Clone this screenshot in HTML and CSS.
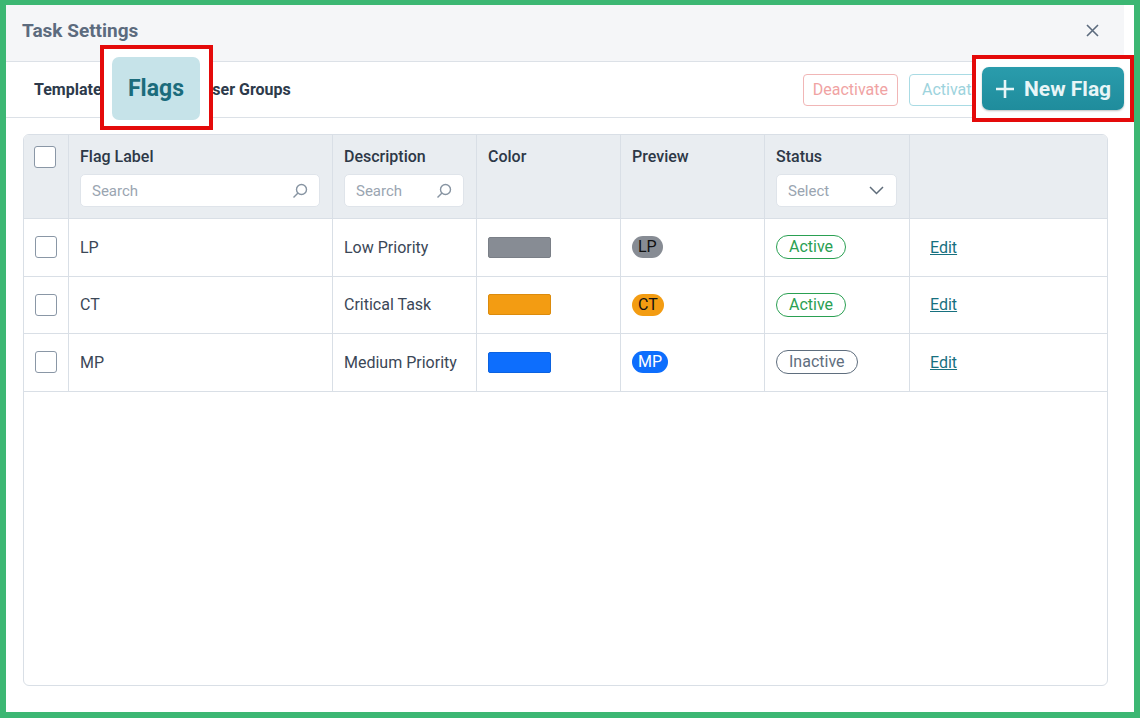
FILE: index.html
```html
<!DOCTYPE html>
<html lang="en">
<head>
    <meta charset="UTF-8">
    <meta name="viewport" content="width=device-width, initial-scale=1.0">
    <title>Task Settings</title>
    <link rel="stylesheet" href="styles.css">
</head>
<body>
    <div class="frame">
        <div class="dialog">
            <div class="dialog-header">
                <h1>Task Settings</h1>
                <button class="close" aria-label="Close">
                    <svg width="13" height="13" viewBox="0 0 13 13"><path d="M1 1L12 12M12 1L1 12" stroke="#5c6b7e" stroke-width="1.6" fill="none"/></svg>
                </button>
            </div>

            <div class="toolbar">
                <nav class="tabs">
                    <span class="tab">Templates</span>
                    <!-- active tab is shown magnified in the callout below -->
                    <span class="tab tab-slot"></span>
                    <span class="tab">User Groups</span>
                </nav>
                <div class="actions">
                    <button class="btn btn-deactivate">Deactivate</button>
                    <button class="btn btn-activate">Activate</button>
                    <span class="btn-slot"></span>
                </div>
            </div>

            <div class="dialog-body">
                <div class="grid">
                    <div class="row head">
                        <div class="cell check-cell"><span class="checkbox"></span></div>
                        <div class="cell">
                            <div class="label">Flag Label</div>
                            <div class="field">
                                <span class="placeholder">Search</span>
                                <svg width="16" height="16" viewBox="0 0 16 16"><circle cx="9.5" cy="6.5" r="5" stroke="#8794a2" stroke-width="1.4" fill="none"/><path d="M6 10L1.5 14.5" stroke="#8794a2" stroke-width="1.5"/></svg>
                            </div>
                        </div>
                        <div class="cell">
                            <div class="label">Description</div>
                            <div class="field">
                                <span class="placeholder">Search</span>
                                <svg width="16" height="16" viewBox="0 0 16 16"><circle cx="9.5" cy="6.5" r="5" stroke="#8794a2" stroke-width="1.4" fill="none"/><path d="M6 10L1.5 14.5" stroke="#8794a2" stroke-width="1.5"/></svg>
                            </div>
                        </div>
                        <div class="cell"><div class="label">Color</div></div>
                        <div class="cell"><div class="label">Preview</div></div>
                        <div class="cell">
                            <div class="label">Status</div>
                            <div class="field select">
                                <span class="placeholder">Select</span>
                                <svg width="15" height="9" viewBox="0 0 15 9"><path d="M1 1L7.5 7.5L14 1" stroke="#5f6c7a" stroke-width="1.5" fill="none"/></svg>
                            </div>
                        </div>
                        <div class="cell last"></div>
                    </div>

                    <div class="row">
                        <div class="cell check-cell"><span class="checkbox"></span></div>
                        <div class="cell">LP</div>
                        <div class="cell">Low Priority</div>
                        <div class="cell"><span class="swatch gray"></span></div>
                        <div class="cell"><span class="pill gray">LP</span></div>
                        <div class="cell"><span class="status active">Active</span></div>
                        <div class="cell last"><a class="edit" href="#">Edit</a></div>
                    </div>

                    <div class="row">
                        <div class="cell check-cell"><span class="checkbox"></span></div>
                        <div class="cell">CT</div>
                        <div class="cell">Critical Task</div>
                        <div class="cell"><span class="swatch orange"></span></div>
                        <div class="cell"><span class="pill orange">CT</span></div>
                        <div class="cell"><span class="status active">Active</span></div>
                        <div class="cell last"><a class="edit" href="#">Edit</a></div>
                    </div>

                    <div class="row">
                        <div class="cell check-cell"><span class="checkbox"></span></div>
                        <div class="cell">MP</div>
                        <div class="cell">Medium Priority</div>
                        <div class="cell"><span class="swatch blue"></span></div>
                        <div class="cell"><span class="pill blue">MP</span></div>
                        <div class="cell"><span class="status inactive">Inactive</span></div>
                        <div class="cell last"><a class="edit" href="#">Edit</a></div>
                    </div>
                </div>
            </div>
        </div>

        <!-- annotation callouts -->
        <div class="callout callout-tab">
            <div class="zoom-tab">Flags</div>
        </div>
        <div class="callout callout-btn">
            <div class="zoom-btn">
                <svg width="20" height="20" viewBox="0 0 20 20"><path d="M10 1V19M1 10H19" stroke="#e8f5f7" stroke-width="2.6"/></svg>
                <span>New Flag</span>
            </div>
        </div>
    </div>
</body>
</html>
```

FILE: styles.css
```css
html, body {
    margin: 0;
    height: 100%;
}
body {
    background-color: #3cb773;
    padding: 5px 6px 6px 6px;
    box-sizing: border-box;
    font-family: Roboto, "Liberation Sans", Arial, sans-serif;
    color: #3b4757;
}
.frame {
    position: relative;
    height: 707px;
    background-color: #fff;
}
.dialog {
    width: 1118px;
}
.dialog-header {
    height: 57px;
    box-sizing: border-box;
    background-color: #f5f6f8;
    border-bottom: 1px solid #dce1e7;
    display: flex;
    align-items: center;
    justify-content: space-between;
    padding: 0 25px 5px 16px;
}
.dialog-header h1 {
    margin: 0;
    font-size: 19px;
    font-weight: 700;
    color: #5c6b7e;
}
.close {
    border: 0;
    background: none;
    padding: 0;
    width: 13px;
    height: 13px;
    display: flex;
}
.toolbar {
    height: 56px;
    box-sizing: border-box;
    border-bottom: 1px solid #dce1e7;
    display: flex;
    align-items: center;
    justify-content: space-between;
    padding: 0 16px 0 14px;
}
.tabs {
    display: flex;
}
.tab {
    padding: 0 14px;
    font-size: 16px;
    font-weight: 700;
    color: #2d3a4b;
}
.tab-slot {
    width: 36px;
}
.actions {
    display: flex;
    gap: 11px;
}
.btn {
    height: 32px;
    padding: 0 9px;
    font-family: inherit;
    font-size: 16px;
    background: #fff;
    border-radius: 4px;
    border: 1px solid;
}
.btn-deactivate {
    border-color: #f1b6b6;
    color: #f0a3a3;
}
.btn-activate {
    border-color: #a9dbe4;
    color: #9dd3dd;
    width: 84px;
}
.btn-slot {
    width: 104px;
}
.dialog-body {
    padding: 16px 16px 0 17px;
}
.grid {
    height: 552px;
    box-sizing: border-box;
    border: 1px solid #d9dfe6;
    border-radius: 6px;
    overflow: hidden;
}
.row {
    display: grid;
    grid-template-columns: 45px 264px 144px 144px 144px 145px 1fr;
    height: 57.5px;
    border-bottom: 1px solid #d9dfe6;
    box-sizing: border-box;
    font-size: 16px;
}
.row.head {
    height: 84px;
    background-color: #e9edf1;
}
.cell {
    border-right: 1px solid #d9dfe6;
    padding: 0 12px 0 11px;
    display: flex;
    align-items: center;
    min-width: 0;
}
.cell.last {
    border-right: 0;
    padding-left: 20px;
}
.head .cell {
    flex-direction: column;
    align-items: stretch;
    justify-content: flex-start;
    padding-top: 12px;
}
.head .check-cell {
    padding: 11px 0 0 10px;
    align-items: flex-start;
}
.check-cell {
    padding: 0 0 0 11px;
}
.label {
    font-weight: 500;
    line-height: 20px;
    color: #2d3847;
}
.field {
    margin-top: 7px;
    height: 33px;
    box-sizing: border-box;
    background: #fff;
    border: 1px solid #dfe4ea;
    border-radius: 5px;
    display: flex;
    align-items: center;
    justify-content: space-between;
    padding: 0 11px 0 11px;
}
.field.select {
    padding-right: 12px;
}
.placeholder {
    font-size: 15px;
    color: #9aa5b1;
}
.checkbox {
    width: 22px;
    height: 22px;
    box-sizing: border-box;
    background: #fff;
    border: 1px solid #8a97a6;
    border-radius: 3px;
}
.swatch {
    width: 63px;
    height: 21px;
    box-sizing: border-box;
    border-radius: 2px;
    border: 1px solid;
}
.swatch.gray { background: #878c94; border-color: #7a7f87; }
.swatch.orange { background: #f39c12; border-color: #dc8b0c; }
.swatch.blue { background: #0d6efd; border-color: #0b62e0; }
.pill {
    height: 22px;
    line-height: 22px;
    padding: 0 6px;
    border-radius: 11px;
    font-size: 16px;
}
.pill.gray { background: #878c94; color: #111; }
.pill.orange { background: #f39c12; color: #111; }
.pill.blue { background: #0d6efd; color: #fff; }
.status {
    height: 24px;
    line-height: 22px;
    box-sizing: border-box;
    padding: 0 12px;
    border-radius: 12px;
    border: 1px solid;
}
.status.active { color: #2aa052; border-color: #2aa052; }
.status.inactive { color: #5f6e7e; border-color: #5f6e7e; }
.edit {
    color: #17707f;
    text-decoration: underline;
}

.callout {
    position: absolute;
    box-sizing: border-box;
    border: 4px solid #e40a0a;
    background: #fff;
}
.callout-tab {
    left: 94px;
    top: 40px;
    width: 113px;
    height: 85px;
    padding: 8px 9px 6px 8px;
}
.zoom-tab {
    height: 100%;
    background: #c6e3e9;
    border-radius: 7px;
    display: flex;
    align-items: center;
    justify-content: center;
    font-size: 23px;
    font-weight: 700;
    color: #1b6c7c;
}
.callout-btn {
    left: 966px;
    top: 50px;
    width: 162px;
    height: 67px;
    padding: 8px 6px 8px 6px;
}
.zoom-btn {
    height: 100%;
    border-radius: 7px;
    background: linear-gradient(#2a9cac, #1f8c9c);
    box-shadow: 0 1px 2px rgba(0, 0, 0, 0.25);
    display: flex;
    align-items: center;
    gap: 9px;
    padding-left: 13px;
    font-size: 21px;
    font-weight: 700;
    color: #e8f5f7;
}
```
